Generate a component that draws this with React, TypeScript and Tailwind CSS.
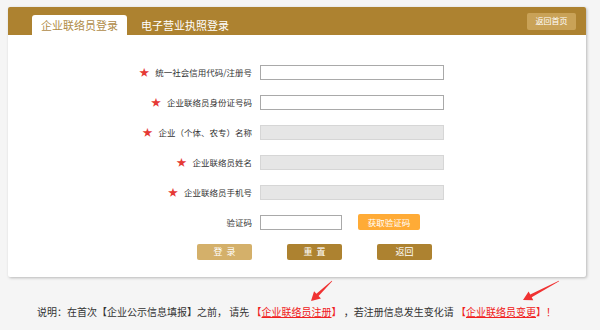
import React from "react";

const font = { fontFamily: '"Noto Sans CJK SC", "Microsoft YaHei", sans-serif' };

function Row({ label, star = true, children }: { label: string; star?: boolean; children: React.ReactNode }) {
  return (
    <div className="grid grid-cols-[244px_1fr] gap-x-[8px] items-center h-[30px]">
      <div className="flex justify-end items-center text-[8.5px] text-[#333]">
        {star && <span className="text-[#e53935] text-[10px] mr-[6px] leading-none">★</span>}
        <span>{label}</span>
      </div>
      <div className="flex items-center">{children}</div>
    </div>
  );
}

function Arrow({ x1, y1, x2, y2 }: { x1: number; y1: number; x2: number; y2: number }) {
  const dx = x2 - x1, dy = y2 - y1;
  const len = Math.hypot(dx, dy);
  const ux = dx / len, uy = dy / len;
  const px = -uy, py = ux;
  const headLen = 9, headW = 5, tailW = 1.6;
  const bx = x2 - ux * headLen, by = y2 - uy * headLen;
  const pts = [
    [x1 + px * 0.3, y1 + py * 0.3],
    [bx + px * tailW, by + py * tailW],
    [bx + px * headW, by + py * headW],
    [x2, y2],
    [bx - px * headW, by - py * headW],
    [bx - px * tailW, by - py * tailW],
    [x1 - px * 0.3, y1 - py * 0.3],
  ]
    .map((p) => p.join(","))
    .join(" ");
  return <polygon points={pts} fill="#f03232" />;
}

export default function App() {
  return (
    <div className="relative w-[600px] h-[330px] bg-[#f5f5f5] pt-[7px] pl-[8px] overflow-hidden" style={font}>
      <div className="w-[578px] bg-white rounded-[2px] shadow-[1px_1px_3px_rgba(0,0,0,0.25)]">
        {/* header */}
        <div className="h-[28px] bg-[#ad8230] rounded-t-[2px] flex items-end pl-[24px] pr-[10px] relative">
          <div className="h-[20px] w-[95px] bg-white rounded-t-[3px] flex items-center justify-center text-[11px] text-[#b08c48]">
            企业联络员登录
          </div>
          <div className="h-[20px] ml-[14px] flex items-center text-[11px] text-white">电子营业执照登录</div>
          <div className="ml-auto self-center h-[17px] w-[49px] bg-[#c9a257] rounded-[2px] flex items-center justify-center text-[8px] text-white">
            返回首页
          </div>
        </div>
        {/* form */}
        <div className="pt-[22px] pb-[17px]">
          <Row label="统一社会信用代码/注册号">
            <div className="w-[184px] h-[15px] border border-[#a9a9a9] bg-white" />
          </Row>
          <Row label="企业联络员身份证号码">
            <div className="w-[184px] h-[15px] border border-[#a9a9a9] bg-white" />
          </Row>
          <Row label="企业（个体、农专）名称">
            <div className="w-[184px] h-[15px] border border-[#d6d6d6] bg-[#e6e6e6]" />
          </Row>
          <Row label="企业联络员姓名">
            <div className="w-[184px] h-[15px] border border-[#d6d6d6] bg-[#e6e6e6]" />
          </Row>
          <Row label="企业联络员手机号">
            <div className="w-[184px] h-[15px] border border-[#d6d6d6] bg-[#e6e6e6]" />
          </Row>
          <Row label="验证码" star={false}>
            <div className="w-[82px] h-[15px] border border-[#a9a9a9] bg-white" />
            <div className="ml-[16px] w-[62px] h-[16px] rounded-[2px] bg-[#ffab36] text-white text-[8.5px] flex items-center justify-center">
              获取验证码
            </div>
          </Row>
          <div className="flex pl-[189px] gap-[35px] mt-[7px]">
            <div className="w-[55px] h-[16px] rounded-[2px] bg-[#d4b06a] text-white text-[9px] flex items-center justify-center">
              登&nbsp;&nbsp;录
            </div>
            <div className="w-[55px] h-[16px] rounded-[2px] bg-[#ad8230] text-white text-[9px] flex items-center justify-center">
              重&nbsp;&nbsp;置
            </div>
            <div className="w-[55px] h-[16px] rounded-[2px] bg-[#ad8230] text-white text-[9px] flex items-center justify-center">
              返回
            </div>
          </div>
        </div>
      </div>
      {/* note */}
      <div className="mt-[28px] pl-[29px] text-[10px] text-[#333] whitespace-nowrap leading-[14px]">
        说明：在首次【企业公示信息填报】之前， 请先 <span className="text-[#f02020]">【<span className="underline">企业联络员注册</span>】</span> ，若注册信息发生变化请 <span className="text-[#f02020]">【<span className="underline">企业联络员变更</span>】！</span>
      </div>
      <svg className="absolute left-0 top-0 pointer-events-none" width="600" height="330">
        <Arrow x1={332} y1={281} x2={311} y2={301} />
        <Arrow x1={559} y1={281} x2={523} y2={300} />
      </svg>
    </div>
  );
}
